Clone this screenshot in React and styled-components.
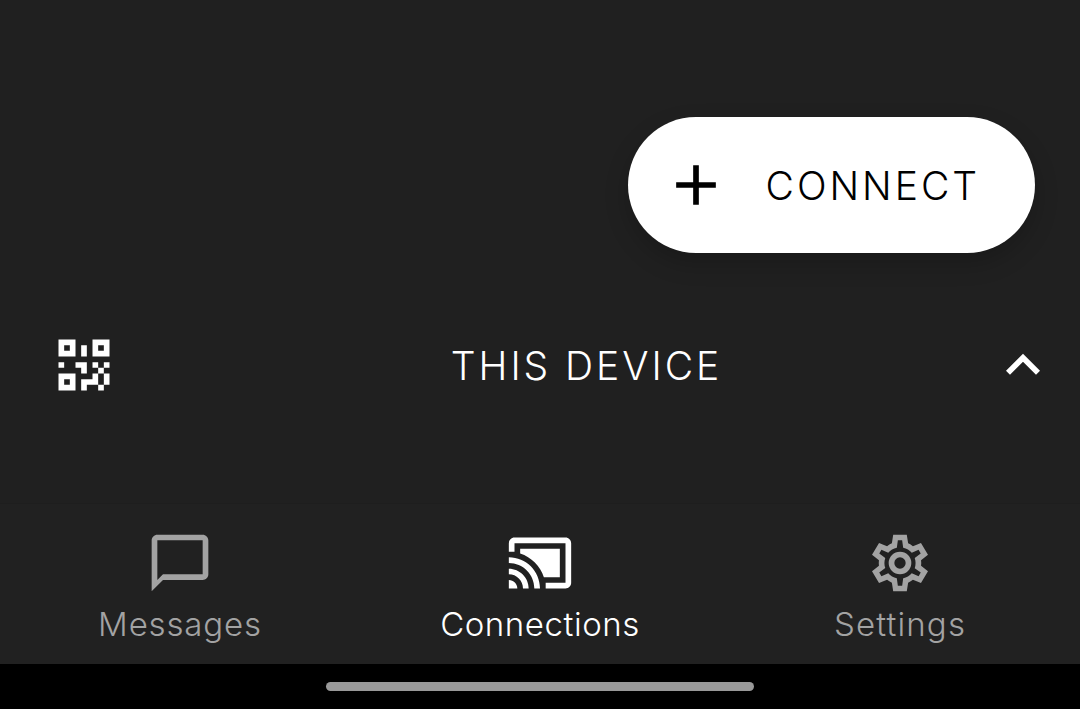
import React from "react";
import styled, { createGlobalStyle } from "styled-components";

const GlobalStyle = createGlobalStyle`
  * { box-sizing: border-box; }
  body { margin: 0; background: #202020; }
`;

const Screen = styled.main`
  display: flex;
  flex-direction: column;
  width: 1080px;
  height: 709px;
  overflow: hidden;
  background: #202020;
  color: #fff;
  font-family: Inter, "Liberation Sans", sans-serif;
  font-weight: 300;
`;

const Content = styled.section`
  display: flex;
  flex-direction: column;
  align-items: flex-end;
  height: 300px;
  padding: 117px 45px 0 0;
`;

const ConnectButton = styled.button`
  display: flex;
  align-items: center;
  gap: 35.5px;
  width: 407px;
  height: 136px;
  padding: 0 0 0 34px;
  border: 0;
  border-radius: 68px;
  background: #fff;
  color: #000;
  box-shadow: 0 10px 24px rgba(0, 0, 0, 0.2);
  font: inherit;
  font-size: 39px;
  letter-spacing: 3px;
  white-space: nowrap;
`;

const Icon = styled.svg`
  display: block;
  flex: none;
  width: 68px;
  height: 68px;
  fill: currentColor;
`;

const DeviceBar = styled.section`
  display: grid;
  grid-template-columns: 68px 1fr 68px;
  align-items: center;
  height: 130px;
  padding: 0 23px 0 50px;
`;

const DeviceTitle = styled.h2`
  margin: 0;
  padding-left: 66px;
  font-size: 39px;
  font-weight: 300;
  letter-spacing: 2.95px;
  text-align: center;
  white-space: nowrap;
`;

const NavBar = styled.nav`
  display: grid;
  grid-template-columns: repeat(3, 1fr);
  height: 161px;
  margin-top: auto;
  padding-top: 25px;
  border-top: 1px solid #1e1e1e;
  background: #212121;
`;

const NavItem = styled.a`
  display: flex;
  flex-direction: column;
  align-items: center;
  gap: 7px;
  color: ${(p) => (p.$active ? "#fff" : "#a3a3a3")};
`;

const NavLabel = styled.span`
  font-size: 33px;
  line-height: 40px;
  letter-spacing: ${(p) => p.$tracking}px;
  white-space: nowrap;
`;

const SystemBar = styled.footer`
  display: flex;
  justify-content: center;
  height: 45px;
  padding-top: 18px;
  background: #000;
`;

const HomeHandle = styled.div`
  width: 428px;
  height: 9px;
  border-radius: 5px;
  background: #999;
`;

const paths = {
  plus: "M19 13h-6v6h-2v-6H5v-2h6V5h2v6h6z",
  qr: "M3 11H5V13H3V11M11 5H13V9H11V5M9 11H13V15H11V13H9V11M15 11H17V13H19V11H21V13H19V15H21V19H19V21H17V19H13V21H11V17H15V15H17V13H15V11M19 19V15H17V19H19M15 3H21V9H15V3M17 5V7H19V5H17M3 3H9V9H3V3M5 5V7H7V5H5M3 15H9V21H3V15M5 17V19H7V17H5Z",
  chevron: "M7.41 15.41L12 10.83L16.59 15.41L18 14L12 8L6 14Z",
  message: "M20 2H4c-1.1 0-2 .9-2 2v18l4-4h14c1.1 0 2-.9 2-2V4c0-1.1-.9-2-2-2zm0 14H6l-2 2V4h16v12z",
  cast: "M21 3H3c-1.1 0-2 .9-2 2v3h2V5h18v14h-7v2h7c1.1 0 2-.9 2-2V5c0-1.1-.9-2-2-2zM1 18v3h3c0-1.66-1.34-3-3-3zm0-4v2c2.76 0 5 2.24 5 5h2c0-3.87-3.13-7-7-7zm18-7H5v1.63c3.96 1.28 7.09 4.41 8.37 8.37H19V7zM1 10v2c4.97 0 9 4.03 9 9h2c0-6.08-4.93-11-11-11z",
  cog: "M12,8A4,4 0 0,1 16,12A4,4 0 0,1 12,16A4,4 0 0,1 8,12A4,4 0 0,1 12,8M12,10A2,2 0 0,0 10,12A2,2 0 0,0 12,14A2,2 0 0,0 14,12A2,2 0 0,0 12,10M9.6,22L9.13,18.93C8.5,18.68 7.96,18.34 7.44,17.94L4.6,19.08L2.12,14.9L4.57,12.97L4.5,12L4.57,11L2.12,9.1L4.6,4.92L7.44,6.05C7.96,5.66 8.5,5.32 9.13,5.07L9.6,2H14.4L14.87,5.07C15.5,5.32 16.04,5.66 16.56,6.05L19.4,4.92L21.88,9.1L19.43,11L19.5,12L19.43,13L21.88,14.9L19.4,19.08L16.56,17.95C16.04,18.34 15.5,18.68 14.87,18.93L14.4,22H9.6M11.25,4L10.88,6.61C9.68,6.86 8.62,7.5 7.85,8.39L5.44,7.35L4.69,8.65L6.8,10.2C6.4,11.37 6.4,12.64 6.8,13.8L4.68,15.36L5.43,16.66L7.86,15.62C8.63,16.5 9.68,17.14 10.87,17.38L11.24,20H12.76L13.13,17.39C14.32,17.14 15.37,16.5 16.14,15.62L18.57,16.66L19.32,15.36L17.2,13.81C17.6,12.64 17.6,11.37 17.2,10.2L19.31,8.65L18.56,7.35L16.15,8.39C15.38,7.5 14.32,6.86 13.12,6.62L12.75,4H11.25Z",
};

const Glyph = ({ name }) => (
  <Icon viewBox="0 0 24 24" aria-hidden="true">
    <path d={paths[name]} />
  </Icon>
);

const tabs = [
  { label: "Messages", icon: "message", tracking: 0.85 },
  { label: "Connections", icon: "cast", tracking: 0.55, active: true },
  { label: "Settings", icon: "cog", tracking: 1.15 },
];

export default function App() {
  return (
    <>
      <GlobalStyle />
      <Screen>
        <Content>
          <ConnectButton>
            <Glyph name="plus" />
            <span>CONNECT</span>
          </ConnectButton>
        </Content>
        <DeviceBar>
          <Glyph name="qr" />
          <DeviceTitle>THIS DEVICE</DeviceTitle>
          <Glyph name="chevron" />
        </DeviceBar>
        <NavBar>
          {tabs.map((tab) => (
            <NavItem key={tab.label} $active={tab.active}>
              <Glyph name={tab.icon} />
              <NavLabel $tracking={tab.tracking}>{tab.label}</NavLabel>
            </NavItem>
          ))}
        </NavBar>
        <SystemBar>
          <HomeHandle />
        </SystemBar>
      </Screen>
    </>
  );
}
